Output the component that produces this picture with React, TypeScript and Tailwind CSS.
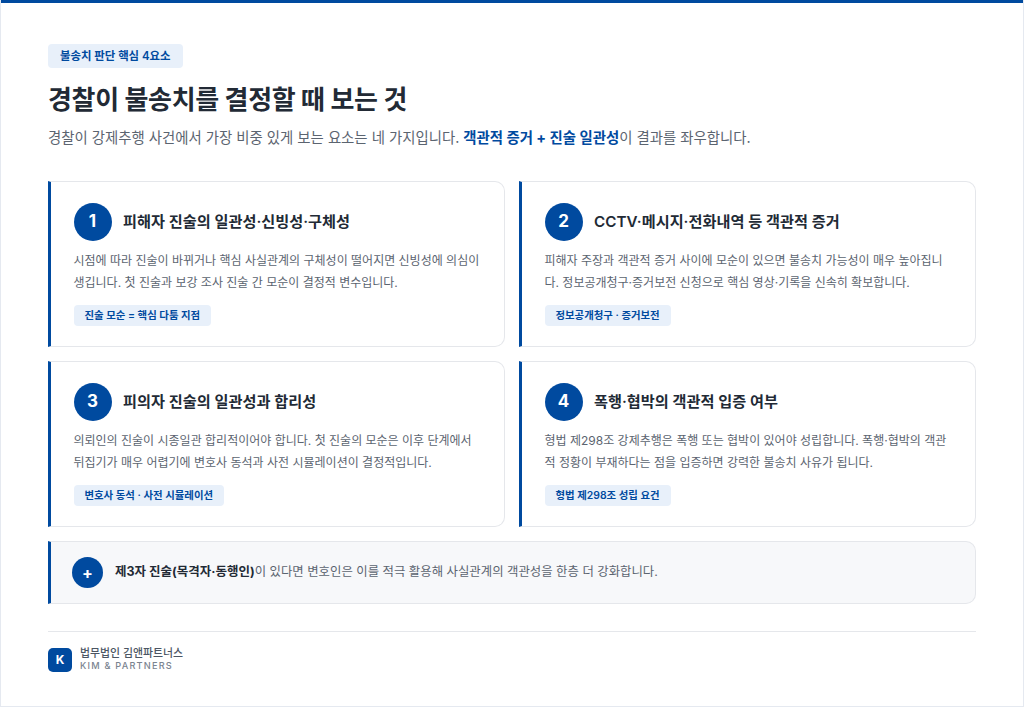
const cards = [
  {
    n: "1",
    title: "피해자 진술의 일관성·신빙성·구체성",
    lines: ["시점에 따라 진술이 바뀌거나 핵심 사실관계의 구체성이 떨어지면 신빙성에 의심이", "생깁니다. 첫 진술과 보강 조사 진술 간 모순이 결정적 변수입니다."],
    tag: "진술 모순 = 핵심 다툼 지점",
  },
  {
    n: "2",
    title: "CCTV·메시지·전화내역 등 객관적 증거",
    lines: ["피해자 주장과 객관적 증거 사이에 모순이 있으면 불송치 가능성이 매우 높아집니", "다. 정보공개청구·증거보전 신청으로 핵심 영상·기록을 신속히 확보합니다."],
    tag: "정보공개청구 · 증거보전",
  },
  {
    n: "3",
    title: "피의자 진술의 일관성과 합리성",
    lines: ["의뢰인의 진술이 시종일관 합리적이어야 합니다. 첫 진술의 모순은 이후 단계에서", "뒤집기가 매우 어렵기에 변호사 동석과 사전 시뮬레이션이 결정적입니다."],
    tag: "변호사 동석 · 사전 시뮬레이션",
  },
  {
    n: "4",
    title: "폭행·협박의 객관적 입증 여부",
    lines: ["형법 제298조 강제추행은 폭행 또는 협박이 있어야 성립합니다. 폭행·협박의 객관", "적 정황이 부재하다는 점을 입증하면 강력한 불송치 사유가 됩니다."],
    tag: "형법 제298조 성립 요건",
  },
];

const Card = ({ n, title, lines, tag }: (typeof cards)[number]) => {
  return (
    <section className="h-[166px] rounded-r-[10px] border border-l-[3px] border-[#e5e7eb] border-l-[#004a9f] bg-white pl-[22.5px] pt-[21px]">
      <div className="flex items-center gap-[11.5px]">
        <div className="flex h-[38px] w-[38px] items-center justify-center rounded-full bg-[#004a9f] text-[17px] font-bold text-white">
          {n}
        </div>
        <h3 className="text-[15.2px] font-semibold text-[#222a35]">{title}</h3>
      </div>
      <p className="mt-[9px] whitespace-nowrap text-[12px] leading-[22px] text-[#5b6470]">
        {lines[0]}
        <br />
        {lines[1]}
      </p>
      <span className="mt-[11px] inline-block rounded-[4px] bg-[#e8f0fa] px-[11px] py-[3px] text-[10.4px] leading-[15px] font-semibold text-[#004a9f]">
        {tag}
      </span>
    </section>
  );
};

export default function App() {
  return (
    <div className="flex h-[707px] w-[1024px] flex-col overflow-hidden border-x-[1.5px] border-b-[1.5px] border-[#e5e9f0] bg-white font-['Inter','Noto_Sans_CJK_KR',sans-serif]">
      <div className="-mx-[2px] h-[3px] shrink-0 bg-[#004a9f]" />
      <main className="flex flex-1 flex-col pl-[47px] pr-[47px] pt-[39px]">
        <div className="h-[24px]">
          <span className="inline-block rounded-[4px] bg-[#e8f0fa] px-[12px] py-[5px] text-[11.4px] leading-[14px] font-semibold text-[#004a9f]">
            불송치 판단 핵심 4요소
          </span>
        </div>
        <h1 className="mt-[16px] text-[26px] leading-[36px] font-bold tracking-[-0.35px] text-[#222a35]">경찰이 불송치를 결정할 때 보는 것</h1>
        <p className="mt-[9px] text-[14.4px] leading-[22px] text-[#5b6470]">
          경찰이 강제추행 사건에서 가장 비중 있게 보는 요소는 네 가지입니다.{" "}
          <strong className="font-bold text-[#004a9f]">객관적 증거 + 진술 일관성</strong>이 결과를 좌우합니다.
        </p>
        <div className="mt-[32px] grid grid-cols-2 gap-[14px]">
          {cards.map((c) => (
            <Card key={c.n} {...c} />
          ))}
        </div>
        <div className="mt-[14px] flex h-[63px] items-center gap-[12px] rounded-r-[10px] border border-l-[3px] border-[#e5e7eb] border-l-[#004a9f] bg-[#f7f8fa] pl-[21px]">
          <div className="flex h-[31px] w-[31px] items-center justify-center rounded-full bg-[#004a9f] text-[16px] font-bold text-white">
            +
          </div>
          <p className="text-[12.4px] text-[#5b6470]">
            <strong className="text-[12.5px] font-bold text-[#222a35]">제3자 진술(목격자·동행인)</strong>이 있다면 변호인은 이를 적극 활용해 사실관계의 객관성을 한층 더 강화합니다.
          </p>
        </div>
        <footer className="mt-[27px] flex items-center gap-[8px] border-t border-[#e5e7eb] pt-[15px]">
          <div className="flex h-[24px] w-[24px] items-center justify-center rounded-[5px] bg-[#004a9f] text-[12px] font-bold text-white">
            K
          </div>
          <div>
            <p className="text-[10.9px] leading-[13px] font-medium text-[#4b5563]">법무법인 김앤파트너스</p>
            <p className="text-[9.2px] leading-[12px] font-medium tracking-[1.2px] text-[#7b8490]">KIM &amp; PARTNERS</p>
          </div>
        </footer>
      </main>
    </div>
  );
}
